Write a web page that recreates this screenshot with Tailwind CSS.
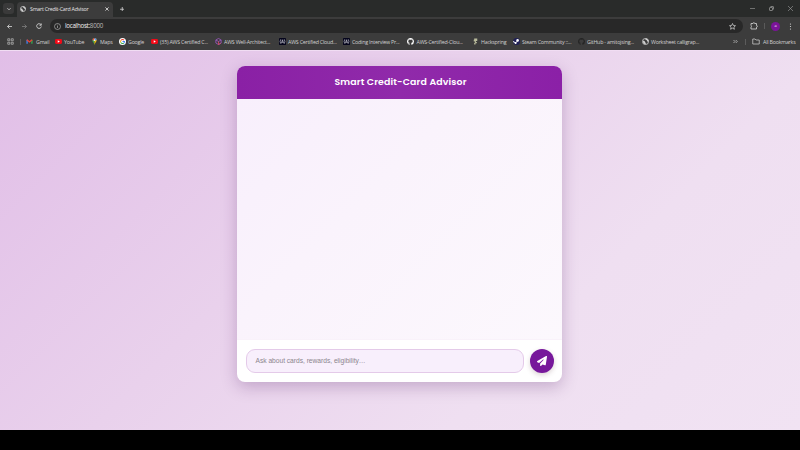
<!DOCTYPE html>
<html lang="en">
<head>
<meta charset="utf-8">
<title>Smart Credit-Card Advisor</title>
<script src="https://cdn.jsdelivr.net/npm/@tailwindcss/browser@4"></script>
</head>
<body class="w-[800px] h-[450px] overflow-hidden bg-black flex flex-col font-['Open_Sans',sans-serif]">
<svg class="hidden">
  <symbol id="globe" viewBox="0 0 16 16"><circle cx="8" cy="8" r="7" fill="none" stroke="#d2d2d2" stroke-width="1.8"/><path d="M2 6l4 1 1 3 2 1-1 4-5-3zM7 1l1 3 3 1 1 3 3 1V5l-4-4z" fill="#d2d2d2"/></symbol>
  <symbol id="yt" viewBox="0 0 16 16"><rect y="2.5" width="16" height="11" rx="3" fill="#f00a18"/><path d="M6.3 5.4v5.2L11 8z" fill="#fff"/></symbol>
  <symbol id="algo" viewBox="0 0 16 16"><rect width="16" height="16" rx="1" fill="#05051c"/><path d="M4 3Q1 8 4 13M12 3q3 5 0 10M5.5 12L8 4l2.500 8M6.500 9.500h3" fill="none" stroke="#e8e8f0" stroke-width="1.300"/></symbol>
  <symbol id="gh" viewBox="0 0 16 16"><path fill="currentColor" d="M8 0C3.580 0 0 3.580 0 8c0 3.540 2.290 6.530 5.470 7.590.4.070.55-.17.55-.38 0-.19-.01-.82-.01-1.490-2.010.37-2.530-.49-2.690-.94-.09-.23-.48-.94-.82-1.130-.28-.15-.68-.52-.01-.53.63-.01 1.080.58 1.230.82.72 1.210 1.870.87 2.330.66.070-.52.28-.87.51-1.070-1.780-.2-3.640-.89-3.640-3.950 0-.87.31-1.590.82-2.150-.08-.2-.36-1.020.08-2.120 0 0 .67-.21 2.200.82a7.600 7.600 0 0 1 4 0c1.530-1.040 2.200-.82 2.200-.82.44 1.100.16 1.920.08 2.120.51.56.82 1.270.82 2.150 0 3.070-1.870 3.750-3.650 3.950.29.25.54.73.54 1.480 0 1.070-.01 1.930-.01 2.200 0 .21.15.46.55.38A8 8 0 0 0 16 8c0-4.420-3.580-8-8-8z"/></symbol>
</svg>

<header class="h-[50px] shrink-0 flex flex-col bg-[#3c3c3c] text-[#d6d6d6]">
  <div class="h-[17px] shrink-0 bg-[#292b2a] flex items-end">
    <div class="ml-[3px] mb-[3px] size-[11px] rounded-[3px] bg-[#3a3a3a] flex items-center justify-center">
      <svg class="size-[4px]" viewBox="0 0 10 10" fill="none" stroke="#e0e0e0" stroke-width="2"><path d="M1 3l4 4 4-4"/></svg>
    </div>
    <div class="ml-[3px] h-[15px] w-[96px] rounded-t-[4px] bg-[#3c3c3c] flex items-center pb-[2px] pl-[3px] pr-[4px]">
      <svg class="size-[6px] mr-[4px] shrink-0"><use href="#globe"/></svg>
      <span class="text-[5.300px] leading-[8px] whitespace-nowrap tracking-[-0.240px] text-[#e6e6e6]">Smart Credit-Card Advisor</span>
      <svg class="size-[4px] ml-auto shrink-0" viewBox="0 0 10 10" stroke="#e8e8e8" stroke-width="2"><path d="M1 1l8 8M9 1L1 9"/></svg>
    </div>
    <svg class="size-[4.500px] ml-[6.500px] mb-[6px]" viewBox="0 0 10 10" stroke="#dcdcdc" stroke-width="1.700"><path d="M5 0v10M0 5h10"/></svg>
    <div class="ml-auto mr-[7px] mb-[6px] flex items-center gap-[14px]">
      <svg class="size-[5px]" viewBox="0 0 10 10" stroke="#989898" stroke-width="1.300"><path d="M0 5h10"/></svg>
      <svg class="size-[5px]" viewBox="0 0 10 10" fill="none" stroke="#a0a0a0" stroke-width="1.400"><rect x="1" y="3" width="6" height="6" rx="1"/><path d="M3 1h5q1 0 1 1v5"/></svg>
      <svg class="size-[5px]" viewBox="0 0 10 10" stroke="#a0a0a0" stroke-width="1.200"><path d="M0 0l10 10M10 0L0 10"/></svg>
    </div>
  </div>

  <div class="h-[18px] shrink-0 flex items-center pl-[7px]">
    <svg class="size-[5px]" viewBox="0 0 10 10" fill="none" stroke="#dadada" stroke-width="1.600"><path d="M10 5H1M5 1L1 5l4 4"/></svg>
    <svg class="size-[5px] ml-[10px]" viewBox="0 0 10 10" fill="none" stroke="#808080" stroke-width="1.600"><path d="M0 5h9M5 1l4 4-4 4"/></svg>
    <svg class="size-[6px] ml-[9px]" viewBox="0 0 12 12" fill="none" stroke="#dadada" stroke-width="1.700"><path d="M10 3.500A4.700 4.700 0 1 0 10.700 7M10.500 1v3.500H7"/></svg>
    <div class="ml-[8px] h-[13.500px] w-[693px] rounded-full bg-[#282828] flex items-center pl-[4px] pr-[7px]">
      <svg class="size-[7px] mr-[4px]" viewBox="0 0 14 14" fill="none" stroke="#b8b8b8" stroke-width="1.300"><circle cx="7" cy="7" r="6"/><path d="M7 6v4M7 3.500v1.500"/></svg>
      <span class="text-[6.200px] leading-[10px] tracking-[-0.270px] text-[#f0f0f0]">localhost:<span class="text-[#bcbcbc]">8000</span></span>
      <svg class="size-[7px] ml-auto" viewBox="0 0 14 14" fill="none" stroke="#d8d8d8" stroke-width="1.400"><path d="M7 1l1.800 4 4.200.4-3.200 2.800 1 4.300L7 10.300l-3.800 2.200 1-4.300L1 5.400 5.200 5z"/></svg>
    </div>
    <svg class="size-[8px] ml-[7px]" viewBox="0 0 16 16" fill="none" stroke="#d0d0d0" stroke-width="1.700"><path d="M2 3h4a1.700 1.700 0 0 1 3.400 0H13v4a1.700 1.700 0 0 1 0 3.400V14H2v-4a1.700 1.700 0 0 0 0-3z"/></svg>
    <div class="w-px h-[6px] bg-[#5a5a5a] ml-[6px]"></div>
    <div class="size-[9px] ml-[6px] rounded-full bg-[#7b1499] text-white text-[4px] leading-[4px] flex items-center justify-center">a</div>
    <svg class="w-[3px] h-[7px] ml-[8.500px]" viewBox="0 0 6 14" fill="#dcdcdc"><circle cx="3" cy="2" r="1.200"/><circle cx="3" cy="7" r="1.200"/><circle cx="3" cy="12" r="1.200"/></svg>
  </div>

  <nav class="h-[15px] shrink-0 flex items-center text-[5.300px] leading-[8px] tracking-[-0.220px] whitespace-nowrap pb-[2px] text-[#d0d0d0]">
    <div class="w-[26px] shrink-0 flex items-center pl-[7px]">
      <svg class="size-[7px]" viewBox="0 0 14 14" fill="none" stroke="#b4b4b4" stroke-width="1.500"><path d="M1.500 1.500h4v4h-4zM8.500 1.500h4v4h-4zM1.500 8.500h4v4h-4zM8.500 8.500h4v4h-4z"/></svg>
      <div class="w-px h-[6px] bg-[#5c5c5c] ml-[6px]"></div>
    </div>
    <div class="w-[29px] shrink-0 flex items-center gap-[3px]"><svg class="size-[7px]" viewBox="0 0 16 16" fill="none" stroke-width="3"><path d="M2.500 13V4" stroke="#4285f4"/><path d="M13.500 13V4" stroke="#34a853"/><path d="M2 4l6 5 6-5" stroke="#ea4335"/></svg><span>Gmail</span></div>
    <div class="w-[36px] shrink-0 flex items-center gap-[2px]"><svg class="size-[7px]"><use href="#yt"/></svg><span>YouTube</span></div>
    <div class="w-[28px] shrink-0 flex items-center gap-[2px]"><svg class="size-[7px]" viewBox="0 0 16 16"><path d="M8 0a5 5 0 0 0-5 5c0 4 4 5 5 11z" fill="#34a853"/><path d="M8 0a5 5 0 0 1 5 5c0 4-4 5-5 11z" fill="#fbbc04"/><path d="M3 5a5 5 0 0 1 5-5v5z" fill="#ea4335"/><path d="M8 0a5 5 0 0 1 5 5H8z" fill="#4285f4"/><circle cx="8" cy="5" r="2" fill="#eee"/></svg><span>Maps</span></div>
    <div class="w-[32px] shrink-0 flex items-center gap-[2px]"><svg class="size-[7px]" viewBox="0 0 16 16" fill="none" stroke-width="2.300"><circle cx="8" cy="8" r="8" fill="#fff"/><path d="M11.500 5A4.500 4.500 0 0 0 4 6" stroke="#ea4335"/><path d="M4 6a4.500 4.500 0 0 0 0 4" stroke="#fbbc05"/><path d="M4 10a4.500 4.500 0 0 0 7 1.500" stroke="#34a853"/><path d="M11 11.500A4.500 4.500 0 0 0 12.500 8H8" stroke="#4285f4"/></svg><span>Google</span></div>
    <div class="w-[64px] shrink-0 flex items-center gap-[2px]"><svg class="size-[7px]"><use href="#yt"/></svg><span>(35) AWS Certified C...</span></div>
    <div class="w-[64px] shrink-0 flex items-center gap-[2px]"><svg class="size-[7px]" viewBox="0 0 16 16" fill="none" stroke="#a65bd0" stroke-width="1.700"><path d="M8 1l6 3.500v7L8 15l-6-3.500v-7zM2 4.500L8 8l6-3.500"/><path d="M8 8v7l5-3" stroke="#ea4a66"/></svg><span>AWS Well-Architect...</span></div>
    <div class="w-[64px] shrink-0 flex items-center gap-[2px]"><svg class="size-[7px]"><use href="#algo"/></svg><span>AWS Certified Cloud...</span></div>
    <div class="w-[64px] shrink-0 flex items-center gap-[2px]"><svg class="size-[7px]"><use href="#algo"/></svg><span>Coding Interview Pr...</span></div>
    <div class="w-[65px] shrink-0 flex items-center gap-[2.500px]"><svg class="size-[7px] text-white"><use href="#gh"/></svg><span>AWS-Certified-Clou...</span></div>
    <div class="w-[41px] shrink-0 flex items-center gap-[2px]"><svg class="size-[7px]" viewBox="0 0 16 16" fill="#b9bb9c"><path d="M5 1h7v6H9v2h2v3H8v3H5v-4h2V8H4V4h1z"/></svg><span>Hackspring</span></div>
    <div class="w-[65px] shrink-0 flex items-center gap-[2px]"><svg class="size-[7px]" viewBox="0 0 16 16"><circle cx="8" cy="8" r="8" fill="#202056"/><path d="M0 8l6 3 4-4" stroke="#fff" stroke-width="2.200" fill="none"/><circle cx="10.500" cy="5.500" r="3" fill="#fff"/><circle cx="6" cy="11.500" r="2.300" fill="#fff"/></svg><span>Steam Community ::...</span></div>
    <div class="w-[64px] shrink-0 flex items-center gap-[2px]"><svg class="size-[7px] text-[#242424]"><use href="#gh"/></svg><span>GitHub - amitojsing...</span></div>
    <div class="shrink-0 flex items-center gap-[2px]"><svg class="size-[7px]"><use href="#globe"/></svg><span>Worksheet calligrap...</span></div>
    <div class="ml-auto w-[67px] shrink-0 flex items-center">
      <svg class="size-[5px]" viewBox="0 0 10 10" fill="none" stroke="#d0d0d0" stroke-width="1.400"><path d="M1 2l3 3-3 3M5.500 2l3 3-3 3"/></svg>
      <div class="w-px h-[6px] bg-[#5c5c5c] ml-[7px]"></div>
      <svg class="w-[8px] h-[7px] ml-[6px] mr-[3px]" viewBox="0 0 16 14" fill="none" stroke="#c4c4c4" stroke-width="1.600"><path d="M1.500 2h4.500l2 2h6.500v8h-13z"/></svg>
      <span>All Bookmarks</span>
    </div>
  </nav>
</header>

<main class="h-[380px] shrink-0 overflow-hidden bg-[linear-gradient(135deg,#e1bee7_0%,#e9d1ec_40%,#efdff1_70%,#f1e3f3_100%)] border-t border-[#f1ddf3] flex justify-center pt-[15px] pr-px">
  <section class="w-[325px] h-[316px] rounded-[8px] overflow-hidden bg-white flex flex-col shadow-[0_5px_16px_rgba(70,20,90,0.25)]">
    <div class="h-[33px] shrink-0 bg-[linear-gradient(90deg,#8a20a5,#902aaa_50%,#8b20a7)] flex items-center justify-center">
      <h1 class="font-['Poppins','Inter',sans-serif] font-semibold text-[9.400px] text-white tracking-[0.150px] pl-[2px]">Smart Credit-Card Advisor</h1>
    </div>
    <div class="h-[240px] shrink-0 bg-[linear-gradient(135deg,#f8effc,#faf3fc_40%,#fcf8fd)]"></div>
    <div class="flex-1 border-t border-[#f9f2fa] flex items-center pl-[8.500px] pr-[8px]">
      <div class="h-[24px] w-[278px] rounded-[9px] border border-[#e4cae9] bg-[#f8effc] flex items-center pl-[9px]">
        <span class="font-['Liberation_Sans',sans-serif] text-[6.700px] tracking-[-0.030px] text-[#8b858c]">Ask about cards, rewards, eligibility…</span>
      </div>
      <button class="size-[24px] ml-auto rounded-full bg-[#77189b] shadow-[0_2px_5px_rgba(90,50,60,0.22)] flex items-center justify-center">
        <svg class="size-[10px]" viewBox="0 0 512 512" fill="#fff"><path d="M498 5c11 8 16 20 14 33l-64 416c-2 10-8 18-16 23-9 5-19 6-28 2l-120-50-68 74c-9 10-23 13-35 8-13-5-21-17-21-30v-84c0-4 2-8 4-11L332 203c6-6 6-16 0-22-6-6-15-6-22-1L106 362 17 317C7 312 0 302 0 290c0-12 6-22 16-28L464 6c11-6 24-6 34-1z"/></svg>
      </button>
    </div>
  </section>
</main>
</body>
</html>
